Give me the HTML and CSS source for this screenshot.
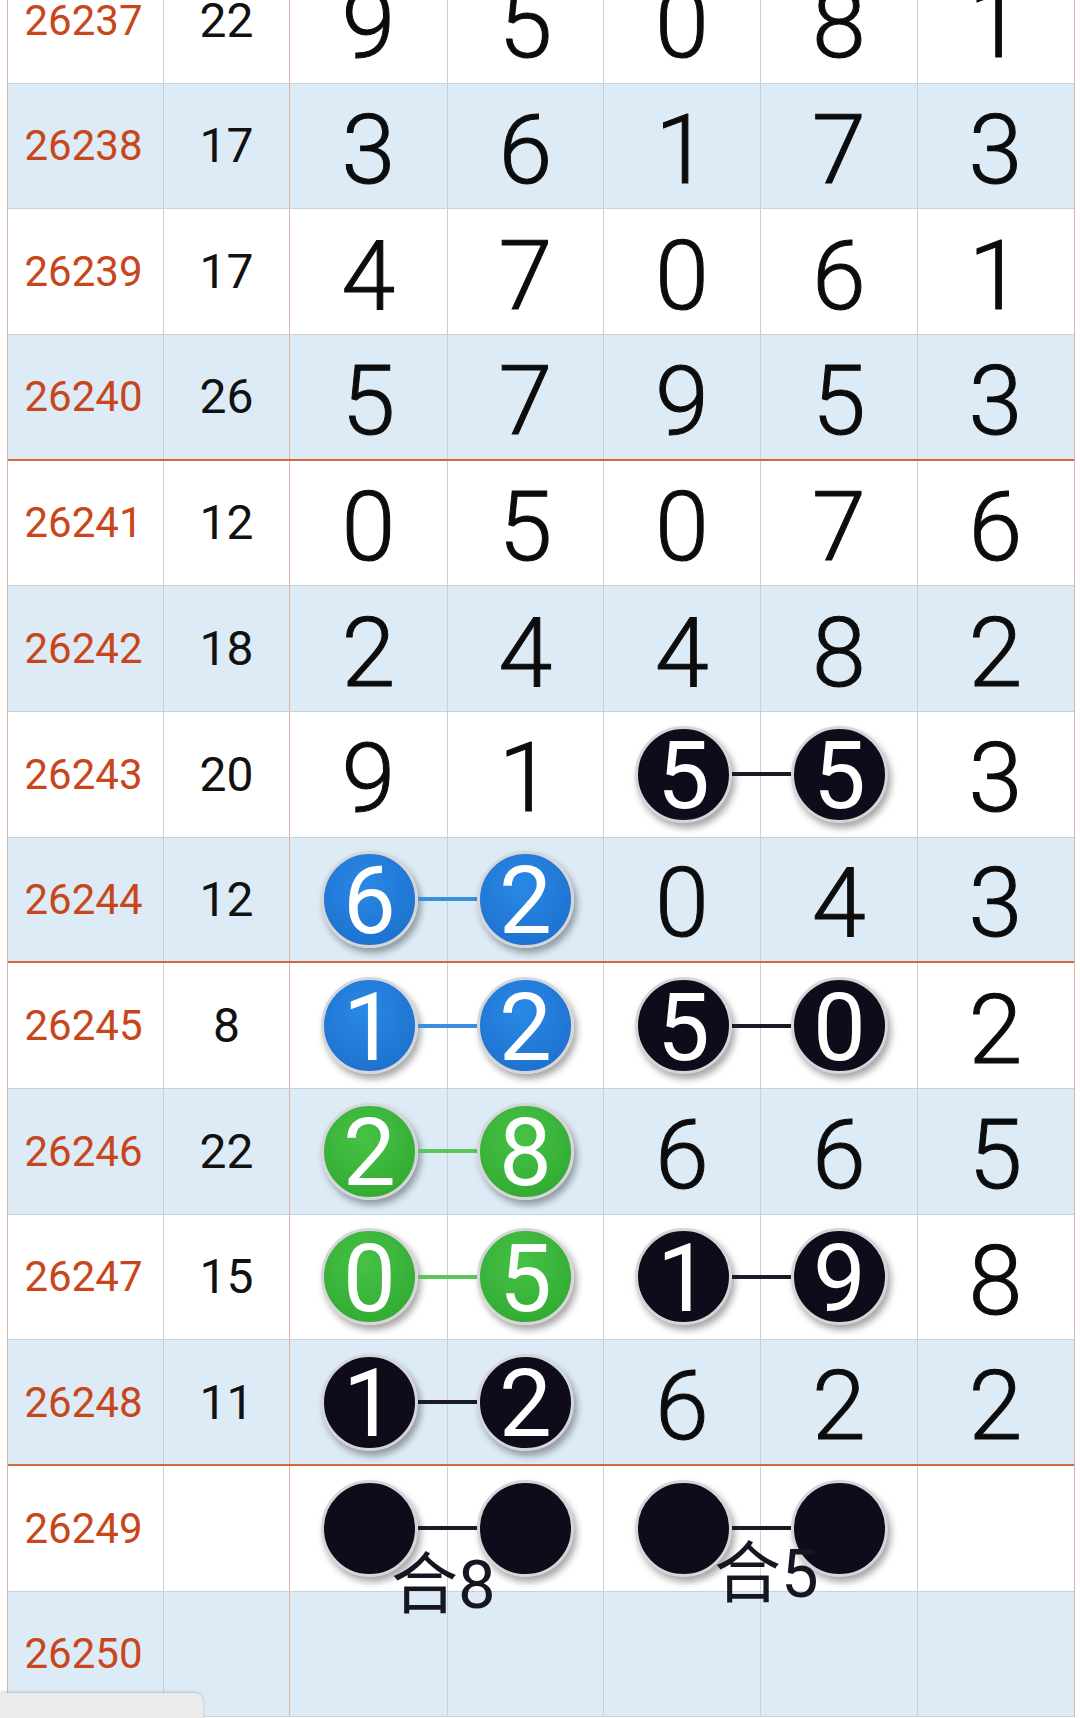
FILE: index.html
```html
<!DOCTYPE html>
<html lang="zh">
<head>
    <meta charset="UTF-8">
    <meta name="viewport" content="width=device-width, initial-scale=1.0">
    <link rel="stylesheet" href="styles.css">
    <title>走势图</title>
</head>
<body>
    <div class="board">

        <div class="row">
            <div class="cell issue">26237</div>
            <div class="cell sum">22</div>
            <div class="cell num">9</div>
            <div class="cell num">5</div>
            <div class="cell num">0</div>
            <div class="cell num">8</div>
            <div class="cell num last">1</div>
        </div>
        <div class="row blue">
            <div class="cell issue">26238</div>
            <div class="cell sum">17</div>
            <div class="cell num">3</div>
            <div class="cell num">6</div>
            <div class="cell num">1</div>
            <div class="cell num">7</div>
            <div class="cell num last">3</div>
        </div>
        <div class="row">
            <div class="cell issue">26239</div>
            <div class="cell sum">17</div>
            <div class="cell num">4</div>
            <div class="cell num">7</div>
            <div class="cell num">0</div>
            <div class="cell num">6</div>
            <div class="cell num last">1</div>
        </div>
        <div class="row blue group">
            <div class="cell issue">26240</div>
            <div class="cell sum">26</div>
            <div class="cell num">5</div>
            <div class="cell num">7</div>
            <div class="cell num">9</div>
            <div class="cell num">5</div>
            <div class="cell num last">3</div>
        </div>

        <div class="row">
            <div class="cell issue">26241</div>
            <div class="cell sum">12</div>
            <div class="cell num">0</div>
            <div class="cell num">5</div>
            <div class="cell num">0</div>
            <div class="cell num">7</div>
            <div class="cell num last">6</div>
        </div>
        <div class="row blue">
            <div class="cell issue">26242</div>
            <div class="cell sum">18</div>
            <div class="cell num">2</div>
            <div class="cell num">4</div>
            <div class="cell num">4</div>
            <div class="cell num">8</div>
            <div class="cell num last">2</div>
        </div>
        <div class="row">
            <div class="cell issue">26243</div>
            <div class="cell sum">20</div>
            <div class="cell num">9</div>
            <div class="cell num">1</div>
            <div class="cell num"></div>
            <div class="cell num"></div>
            <div class="cell num last">3</div>
            <div class="pair right dark">
                <span class="ball">5</span><span class="link"></span><span class="ball">5</span>
            </div>
        </div>
        <div class="row blue group">
            <div class="cell issue">26244</div>
            <div class="cell sum">12</div>
            <div class="cell num"></div>
            <div class="cell num"></div>
            <div class="cell num">0</div>
            <div class="cell num">4</div>
            <div class="cell num last">3</div>
            <div class="pair left azure">
                <span class="ball">6</span><span class="link"></span><span class="ball">2</span>
            </div>
        </div>

        <div class="row">
            <div class="cell issue">26245</div>
            <div class="cell sum">8</div>
            <div class="cell num"></div>
            <div class="cell num"></div>
            <div class="cell num"></div>
            <div class="cell num"></div>
            <div class="cell num last">2</div>
            <div class="pair left azure">
                <span class="ball">1</span><span class="link"></span><span class="ball">2</span>
            </div>
            <div class="pair right dark">
                <span class="ball">5</span><span class="link"></span><span class="ball">0</span>
            </div>
        </div>
        <div class="row blue">
            <div class="cell issue">26246</div>
            <div class="cell sum">22</div>
            <div class="cell num"></div>
            <div class="cell num"></div>
            <div class="cell num">6</div>
            <div class="cell num">6</div>
            <div class="cell num last">5</div>
            <div class="pair left green">
                <span class="ball">2</span><span class="link"></span><span class="ball">8</span>
            </div>
        </div>
        <div class="row">
            <div class="cell issue">26247</div>
            <div class="cell sum">15</div>
            <div class="cell num"></div>
            <div class="cell num"></div>
            <div class="cell num"></div>
            <div class="cell num"></div>
            <div class="cell num last">8</div>
            <div class="pair left green">
                <span class="ball">0</span><span class="link"></span><span class="ball">5</span>
            </div>
            <div class="pair right dark">
                <span class="ball">1</span><span class="link"></span><span class="ball">9</span>
            </div>
        </div>
        <div class="row blue group">
            <div class="cell issue">26248</div>
            <div class="cell sum">11</div>
            <div class="cell num"></div>
            <div class="cell num"></div>
            <div class="cell num">6</div>
            <div class="cell num">2</div>
            <div class="cell num last">2</div>
            <div class="pair left dark">
                <span class="ball">1</span><span class="link"></span><span class="ball">2</span>
            </div>
        </div>

        <div class="row">
            <div class="cell issue">26249</div>
            <div class="cell sum"></div>
            <div class="cell num"></div>
            <div class="cell num"></div>
            <div class="cell num"></div>
            <div class="cell num"></div>
            <div class="cell num last"></div>
            <div class="pair left dark">
                <span class="ball"></span><span class="link"></span><span class="ball"></span>
                <span class="total total-a">合8</span>
            </div>
            <div class="pair right dark">
                <span class="ball"></span><span class="link"></span><span class="ball"></span>
                <span class="total total-b">合5</span>
            </div>
        </div>
        <div class="row blue">
            <div class="cell issue">26250</div>
            <div class="cell sum"></div>
            <div class="cell num"></div>
            <div class="cell num"></div>
            <div class="cell num"></div>
            <div class="cell num"></div>
            <div class="cell num last"></div>
        </div>

    </div>

    <div class="toast"></div>
</body>
</html>
```

FILE: styles.css
```css
body {
    margin: 0;
    padding: 0;
    background: #ffffff;
    height: 1718px;
    overflow: hidden;
    font-family: Roboto, "Noto Sans", sans-serif;
}

.board {
    width: 1066px;
    margin: -42px 0 0 7px;
    border-left: 1px solid #d9b3a3;
    border-right: 1px solid #d9b3a3;
}

.row {
    display: grid;
    grid-template-columns: 156px 126px 158px 156px 157px 157px 155px;
    grid-template-rows: 1fr;
    height: 125.67px;
    box-sizing: border-box;
    border-bottom: 1px solid #c9d0d6;
    background: #ffffff;
}

.row.blue {
    background: #dcebf6;
}

.row.group {
    border-bottom: 2px solid #cf6a40;
}

.cell {
    grid-row: 1;
    display: flex;
    align-items: center;
    justify-content: center;
    border-right: 1px solid #c9d0d6;
    box-sizing: border-box;
}

.cell:nth-child(1) { grid-column: 1; }
.cell:nth-child(2) { grid-column: 2; }
.cell:nth-child(3) { grid-column: 3; }
.cell:nth-child(4) { grid-column: 4; }
.cell:nth-child(5) { grid-column: 5; }
.cell:nth-child(6) { grid-column: 6; }
.cell:nth-child(7) { grid-column: 7; }

.cell.sum {
    border-right-color: #d9b3a3;
}

.cell.last {
    border-right: none;
}

.issue {
    color: #c8461c;
    font-size: 42px;
    padding-right: 4px;
}

.sum {
    color: #111111;
    font-size: 48px;
}

.num {
    color: #0c0c0c;
    font-size: 97px;
    font-weight: 300;
    -webkit-text-stroke: 1px #0c0c0c;
    padding-top: 8px;
}

/* two balls joined by a line, laid over two cells */
.pair {
    grid-row: 1;
    position: relative;
    display: flex;
    align-items: center;
    padding: 0 30px 0 31px;
}

.pair.left {
    grid-column: 3 / span 2;
}

.pair.right {
    grid-column: 5 / span 2;
}

.ball {
    flex: none;
    width: 97px;
    height: 97px;
    box-sizing: border-box;
    border-radius: 50%;
    border: 3px solid #d6d6da;
    box-shadow: 3px 5px 7px rgba(0, 0, 0, 0.35);
    display: flex;
    align-items: center;
    justify-content: center;
    color: #ffffff;
    font-size: 94px;
    line-height: 1;
    padding-top: 4px;
}

.link {
    flex: 1;
    height: 4px;
}

.dark .ball {
    background: #0e0b1a;
}

.dark .link {
    background: #1c1a24;
}

.azure .ball {
    background: radial-gradient(circle at 45% 35%, #2a88e6, #1a6cc8);
}

.azure .link {
    background: #3a8fe2;
}

.green .ball {
    background: radial-gradient(circle at 45% 35%, #46c246, #2ea52e);
}

.green .link {
    background: #5ac65a;
}

.total {
    position: absolute;
    z-index: 2;
    color: #161622;
    font-family: Roboto, "Noto Sans CJK SC", sans-serif;
    font-size: 67px;
    line-height: 1;
    white-space: nowrap;
}

.total-a {
    left: 101px;
    top: 86px;
}

.total-b {
    left: 110px;
    top: 75px;
}

.toast {
    position: fixed;
    left: 0;
    top: 1693px;
    width: 203px;
    height: 40px;
    background: #ececec;
    border-radius: 0 8px 0 0;
    box-shadow: 0 -1px 3px rgba(0, 0, 0, 0.18);
}
```
